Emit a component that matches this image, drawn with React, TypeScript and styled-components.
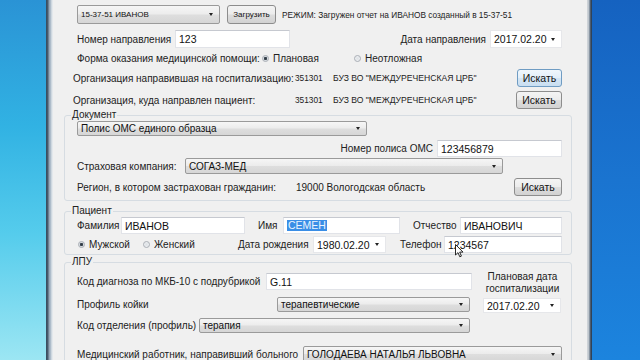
import React from 'react';
import styled, { createGlobalStyle } from 'styled-components';

const GlobalStyle = createGlobalStyle`
  html, body {
    margin: 0;
    padding: 0;
    width: 640px;
    height: 360px;
    overflow: hidden;
  }
  body {
    font-family: "Liberation Sans", Arial, sans-serif;
    color: #1e1e1e;
  }
`;

const Screen = styled.div`
  position: relative;
  display: flex;
  width: 640px;
  height: 360px;
  overflow: hidden;
`;

const Desktop = styled.div<{ $side: 'left' | 'right' }>`
  flex: 0 0 ${(p) => (p.$side === 'left' ? 46 : 48)}px;
  background: ${(p) =>
    p.$side === 'left'
      ? 'linear-gradient(to bottom, #2a93d5 0%, #31b2e3 35%, #55ccec 65%, #9ce6f3 100%)'
      : 'linear-gradient(to bottom, #1562c0 0%, #1a74d0 50%, #1c84de 100%)'};
`;

const Frame = styled.div<{ $side: 'left' | 'right' }>`
  flex: 0 0 ${(p) => (p.$side === 'left' ? 7 : 5)}px;
  background: ${(p) =>
    p.$side === 'left'
      ? 'linear-gradient(to right, #34495c 0, #4d5f70 2px, #8fa1b2 3px, #b9c6d2 5px, #e3e8ec 6px)'
      : 'linear-gradient(to right, #d4d8dc 0, #b8c0c8 2px, #5a6a7c 3px, #22354c 5px)'};
`;

const Client = styled.div`
  flex: 0 0 534px;
  box-sizing: border-box;
  display: flex;
  flex-direction: column;
  padding: 5px 25px 0 24px;
  background: #f0f0f0;
  font-size: 10px;
`;

const Row = styled.div<{ $h: number; $mt?: number; $indent?: number }>`
  display: flex;
  align-items: center;
  height: ${(p) => p.$h}px;
  margin-top: ${(p) => p.$mt ?? 0}px;
  margin-left: ${(p) => p.$indent ?? 0}px;
  flex: 0 0 auto;
`;

const Label = styled.span<{ $w?: number; $size?: number; $ml?: number }>`
  flex: 0 0 auto;
  ${(p) => (p.$w ? `width: ${p.$w}px;` : '')}
  margin-left: ${(p) => p.$ml ?? 0}px;
  font-size: ${(p) => p.$size ?? 10}px;
  white-space: nowrap;
  color: #222;
`;

const Spacer = styled.div`
  flex: 1 1 auto;
`;

const Gap = styled.div<{ $w: number }>`
  flex: 0 0 ${(p) => p.$w}px;
`;

const TextBox = styled.div<{ $w: number; $ml?: number }>`
  flex: 0 0 auto;
  box-sizing: border-box;
  display: flex;
  align-items: center;
  width: ${(p) => p.$w}px;
  height: 100%;
  margin-left: ${(p) => p.$ml ?? 0}px;
  padding-left: 3px;
  background: #ffffff;
  border: 1px solid #e1e3e8;
  border-top-color: #c6c9d0;
  font-size: 10.5px;
  color: #111;
  white-space: nowrap;
  overflow: hidden;
`;

const Selected = styled.span`
  background: #3a8ee6;
  color: #eaf4ff;
  padding: 0 1px;
  line-height: 11px;
`;

const DropArrow = styled.span`
  flex: 0 0 auto;
  width: 0;
  height: 0;
  margin: 0 6px 0 auto;
  border-left: 2.5px solid transparent;
  border-right: 2.5px solid transparent;
  border-top: 3px solid #222;
`;

const Combo = styled.div<{ $w: number; $size?: number }>`
  flex: 0 0 auto;
  box-sizing: border-box;
  display: flex;
  align-items: center;
  width: ${(p) => p.$w}px;
  height: 100%;
  padding-left: 3px;
  border: 1px solid #9a9a9a;
  border-radius: 2px;
  background: linear-gradient(to bottom, #f6f6f6 0%, #ececec 48%, #dedede 52%, #d6d6d6 100%);
  font-size: ${(p) => p.$size ?? 10}px;
  color: #111;
  white-space: nowrap;
  overflow: hidden;
`;

const DatePicker = styled.div<{ $w: number }>`
  flex: 0 0 auto;
  box-sizing: border-box;
  display: flex;
  align-items: center;
  width: ${(p) => p.$w}px;
  height: 100%;
  padding-left: 3px;
  background: #ffffff;
  border: 1px solid #e6e7ea;
  font-size: 10.5px;
  color: #111;
  white-space: nowrap;
`;

const Button = styled.button<{ $w: number; $focused?: boolean; $size?: number }>`
  flex: 0 0 auto;
  box-sizing: border-box;
  width: ${(p) => p.$w}px;
  height: 100%;
  padding: 0;
  margin: 0;
  border: 1px solid ${(p) => (p.$focused ? '#6f9cc3' : '#8d8d8d')};
  border-radius: 3px;
  background: ${(p) =>
    p.$focused
      ? 'linear-gradient(to bottom, #f0f7fc 0%, #e3eff9 48%, #d4e6f5 52%, #c9def0 100%)'
      : 'linear-gradient(to bottom, #f4f4f4 0%, #ececec 48%, #dddddd 52%, #d2d2d2 100%)'};
  font-family: inherit;
  font-size: ${(p) => p.$size ?? 10.5}px;
  color: #111;
  white-space: nowrap;
`;

const RadioItem = styled.span<{ $w?: number; $ml?: number }>`
  flex: 0 0 auto;
  display: flex;
  align-items: center;
  gap: 4px;
  ${(p) => (p.$w ? `width: ${p.$w}px;` : '')}
  margin-left: ${(p) => p.$ml ?? 0}px;
  font-size: 10px;
  color: #222;
  white-space: nowrap;
`;

const RadioDot = styled.span<{ $checked?: boolean }>`
  flex: 0 0 auto;
  box-sizing: border-box;
  width: 7px;
  height: 7px;
  border-radius: 50%;
  border: 1px solid #a9aeb5;
  background: ${(p) =>
    p.$checked
      ? 'radial-gradient(circle, #2f3a44 0, #3b4650 1.3px, #d6dbe0 2px, #eef0f2 100%)'
      : 'radial-gradient(circle, #dde1e5 0, #f2f3f5 100%)'};
`;

const Group = styled.fieldset<{ $mt: number; $pb: number }>`
  flex: 0 0 auto;
  min-width: 0;
  margin: ${(p) => p.$mt}px -10px 0 -13px;
  padding: 0 9px ${(p) => p.$pb}px 12px;
  border: 1px solid #d6dce2;
  border-radius: 3px;
`;

const Legend = styled.legend`
  margin-left: -6px;
  padding: 0 1px;
  font-size: 10px;
  line-height: 12px;
  color: #222;
`;

const Columns = styled.div`
  display: flex;
  gap: 11px;
  margin-top: 3px;
`;

const Column = styled.div<{ $w: number }>`
  flex: 0 0 ${(p) => p.$w}px;
  display: flex;
  flex-direction: column;
`;

const CenterLabel = styled.div`
  font-size: 10px;
  line-height: 12px;
  text-align: center;
  color: #222;
`;

const Cursor = styled.svg`
  position: absolute;
  left: 455px;
  top: 244px;
`;

export default function App() {
  return (
    <Screen>
      <GlobalStyle />
      <Desktop $side="left" />
      <Frame $side="left" />
      <Client>
        <Row $h={19}>
          <Combo $w={143} $size={8}>
            15-37-51 ИВАНОВ
            <DropArrow />
          </Combo>
          <Gap $w={7} />
          <Button $w={49} $size={8}>Загрузить</Button>
          <Label $size={8.3} $ml={6}>РЕЖИМ: Загружен отчет на ИВАНОВ созданный в 15-37-51</Label>
        </Row>

        <Row $h={18} $mt={6}>
          <Label $w={98}>Номер направления</Label>
          <TextBox $w={115}>123</TextBox>
          <Spacer />
          <Label>Дата направления</Label>
          <Gap $w={4} />
          <DatePicker $w={72}>
            2017.02.20
            <DropArrow />
          </DatePicker>
        </Row>

        <Row $h={16} $mt={2}>
          <Label $w={185}>Форма оказания медицинской помощи:</Label>
          <RadioItem $w={92}>
            <RadioDot $checked />
            Плановая
          </RadioItem>
          <RadioItem>
            <RadioDot />
            Неотложная
          </RadioItem>
        </Row>

        <Row $h={18} $mt={3} $indent={-4}>
          <Label $w={222}>Организация направившая на госпитализацию:</Label>
          <Label $w={38} $size={8.3}>351301</Label>
          <Label $size={8.6}>БУЗ ВО "МЕЖДУРЕЧЕНСКАЯ ЦРБ"</Label>
          <Spacer />
          <Button $w={45} $focused>Искать</Button>
        </Row>

        <Row $h={18} $mt={4} $indent={-4}>
          <Label $w={222}>Организация, куда направлен пациент:</Label>
          <Label $w={38} $size={8.3}>351301</Label>
          <Label $size={8.6}>БУЗ ВО "МЕЖДУРЕЧЕНСКАЯ ЦРБ"</Label>
          <Spacer />
          <Button $w={46}>Искать</Button>
        </Row>

        <Group $mt={0} $pb={4}>
          <Legend>Документ</Legend>
          <Row $h={15}>
            <Combo $w={290}>
              Полис ОМС единого образца
              <DropArrow />
            </Combo>
          </Row>
          <Row $h={17} $mt={4}>
            <Spacer />
            <Label>Номер полиса ОМС</Label>
            <Gap $w={4} />
            <TextBox $w={125}>123456879</TextBox>
          </Row>
          <Row $h={16} $mt={1}>
            <Label $w={108}>Страховая компания:</Label>
            <Combo $w={318}>
              СОГАЗ-МЕД
              <DropArrow />
            </Combo>
          </Row>
          <Row $h={18} $mt={4}>
            <Label $w={219}>Регион, в котором застрахован гражданин:</Label>
            <Label>19000 Вологодская область</Label>
            <Spacer />
            <Button $w={48}>Искать</Button>
          </Row>
        </Group>

        <Group $mt={4} $pb={1}>
          <Legend>Пациент</Legend>
          <Row $h={17}>
            <Label $w={44}>Фамилия</Label>
            <TextBox $w={124}>ИВАНОВ</TextBox>
            <Label $w={25} $ml={13}>Имя</Label>
            <TextBox $w={117}>
              <Selected>СЕМЕН</Selected>
            </TextBox>
            <Label $w={47} $ml={13}>Отчество</Label>
            <TextBox $w={102}>ИВАНОВИЧ</TextBox>
          </Row>
          <Row $h={17} $mt={2}>
            <RadioItem $w={65} $ml={1}>
              <RadioDot $checked />
              Мужской
            </RadioItem>
            <RadioItem $w={95}>
              <RadioDot />
              Женский
            </RadioItem>
            <Label $w={75}>Дата рождения</Label>
            <DatePicker $w={73}>
              1980.02.20
              <DropArrow />
            </DatePicker>
            <Label $w={44} $ml={14}>Телефон</Label>
            <TextBox $w={118}>1234567</TextBox>
          </Row>
        </Group>

        <Group $mt={1} $pb={0}>
          <Legend>ЛПУ</Legend>
          <Columns>
            <Column $w={395}>
              <Row $h={17} $mt={2}>
                <Label $w={189}>Код диагноза по МКБ-10 с подрубрикой</Label>
                <TextBox $w={206}>G.11</TextBox>
              </Row>
              <Row $h={15} $mt={7}>
                <Label $w={200}>Профиль койки</Label>
                <Combo $w={193}>
                  терапевтические
                  <DropArrow />
                </Combo>
              </Row>
              <Row $h={15} $mt={6}>
                <Label $w={122}>Код отделения (профиль)</Label>
                <Combo $w={271}>
                  терапия
                  <DropArrow />
                </Combo>
              </Row>
            </Column>
            <Column $w={79}>
              <CenterLabel>
                Плановая дата
                <br />
                госпитализации
              </CenterLabel>
              <Row $h={15} $mt={3}>
                <DatePicker $w={78}>
                  2017.02.20
                  <DropArrow />
                </DatePicker>
              </Row>
            </Column>
          </Columns>
          <Row $h={16} $mt={13}>
            <Label $w={226}>Медицинский работник, направивший больного</Label>
            <Combo $w={259}>
              ГОЛОДАЕВА НАТАЛЬЯ ЛЬВОВНА
              <DropArrow />
            </Combo>
          </Row>
        </Group>
      </Client>
      <Frame $side="right" />
      <Desktop $side="right" />

      <Cursor width="9" height="14" viewBox="0 0 9 14">
        <path
          d="M0.5 0.5 L0.5 11 L3 8.6 L4.8 12.8 L6.4 12.1 L4.7 8.1 L8 8.1 Z"
          fill="#ffffff"
          stroke="#111111"
          strokeWidth="0.9"
          strokeLinejoin="round"
        />
      </Cursor>
    </Screen>
  );
}
